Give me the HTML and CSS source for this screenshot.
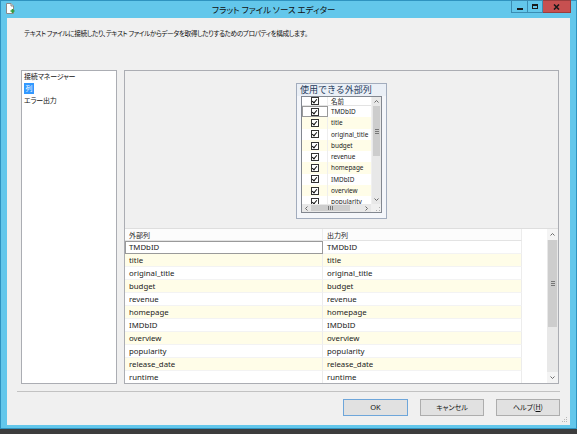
FILE: index.html
```html
<!DOCTYPE html>
<html lang="ja">
<head>
<meta charset="utf-8">
<title>フラット ファイル ソース エディター</title>
<link rel="stylesheet" href="styles.css">
</head>
<body>
<div class="window">
  <div class="titlebar">
    <svg class="app-icon" width="9" height="11" viewBox="0 0 9 11">
      <path d="M0.5 0.5H5L7.5 3V10.5H0.5Z" fill="#fff" stroke="#8a8a8a"/>
      <path d="M5 0.5V3H7.5" fill="#e0e0e0" stroke="#8a8a8a"/>
      <path d="M6.5 6V10M4.5 8H8.5" stroke="#2e9e3e" stroke-width="1.6"/>
    </svg>
    <div class="title">フラット ファイル ソース エディター</div>
    <div class="caption-buttons">
      <div class="cbtn min"><span class="glyph-min"></span></div>
      <div class="cbtn max"><span class="glyph-max"></span></div>
      <div class="cbtn close">
        <svg width="7" height="6" viewBox="0 0 7 6"><path d="M1 0.5L6 5.5M6 0.5L1 5.5" stroke="#1a1a1a" stroke-width="1.6"/></svg>
      </div>
    </div>
  </div>

  <div class="client">
    <p class="desc">テキスト ファイルに接続したり、テキスト ファイルからデータを取得したりするためのプロパティを構成します。</p>

    <div class="main">
      <ul class="nav">
        <li>接続マネージャー</li>
        <li><span class="sel">列</span></li>
        <li>エラー出力</li>
      </ul>

      <div class="panel">
        <div class="chooser-area">
          <div class="chooser">
            <div class="chooser-title">使用できる外部列</div>
            <div class="chooser-list">
              <div class="cl-body">
                <div class="cl-row cl-head">
                  <div class="cl-chk"><span class="chk"></span></div>
                  <div class="cl-name cjk">名前</div>
                </div>
                <div class="cl-row"><div class="cl-chk focus"><span class="chk"></span></div><div class="cl-name">TMDbID</div></div>
                <div class="cl-row alt"><div class="cl-chk"><span class="chk"></span></div><div class="cl-name">title</div></div>
                <div class="cl-row"><div class="cl-chk"><span class="chk"></span></div><div class="cl-name">original_title</div></div>
                <div class="cl-row alt"><div class="cl-chk"><span class="chk"></span></div><div class="cl-name">budget</div></div>
                <div class="cl-row"><div class="cl-chk"><span class="chk"></span></div><div class="cl-name">revenue</div></div>
                <div class="cl-row alt"><div class="cl-chk"><span class="chk"></span></div><div class="cl-name">homepage</div></div>
                <div class="cl-row"><div class="cl-chk"><span class="chk"></span></div><div class="cl-name">IMDbID</div></div>
                <div class="cl-row alt"><div class="cl-chk"><span class="chk"></span></div><div class="cl-name">overview</div></div>
                <div class="cl-row"><div class="cl-chk"><span class="chk"></span></div><div class="cl-name">popularity</div></div>
              </div>
              <div class="vscroll vs-small">
                <div class="arrow"><svg width="5" height="3" viewBox="0 0 5 3"><path d="M0.5 2.5L2.5 0.5L4.5 2.5" stroke="#6a6a6a" fill="none"/></svg></div>
                <div class="thumb thumb-v-small"><span class="grip-h"></span></div>
                <div class="track"></div>
                <div class="arrow"><svg width="5" height="3" viewBox="0 0 5 3"><path d="M0.5 0.5L2.5 2.5L4.5 0.5" stroke="#6a6a6a" fill="none"/></svg></div>
              </div>
              <div class="hscroll">
                <div class="arrow"><svg width="3" height="5" viewBox="0 0 3 5"><path d="M2.5 0.5L0.5 2.5L2.5 4.5" stroke="#6a6a6a" fill="none"/></svg></div>
                <div class="thumb thumb-h"><span class="grip-v"></span></div>
                <div class="track"></div>
                <div class="arrow"><svg width="3" height="5" viewBox="0 0 3 5"><path d="M0.5 0.5L2.5 2.5L0.5 4.5" stroke="#6a6a6a" fill="none"/></svg></div>
              </div>
              <div class="corner">
                <svg width="4" height="4" viewBox="0 0 4 4"><rect x="3" y="0" width="1" height="1" fill="#b0b0b0"/><rect x="3" y="3" width="1" height="1" fill="#b0b0b0"/><rect x="0" y="3" width="1" height="1" fill="#b0b0b0"/></svg>
              </div>
            </div>
          </div>
        </div>

        <div class="grid">
          <div class="grid-body">
            <div class="g-row g-head"><div class="g-cell">外部列</div><div class="g-cell c2">出力列</div></div>
            <div class="g-row"><div class="g-cell focus">TMDbID</div><div class="g-cell c2">TMDbID</div></div>
            <div class="g-row alt"><div class="g-cell">title</div><div class="g-cell c2">title</div></div>
            <div class="g-row"><div class="g-cell">original_title</div><div class="g-cell c2">original_title</div></div>
            <div class="g-row alt"><div class="g-cell">budget</div><div class="g-cell c2">budget</div></div>
            <div class="g-row"><div class="g-cell">revenue</div><div class="g-cell c2">revenue</div></div>
            <div class="g-row alt"><div class="g-cell">homepage</div><div class="g-cell c2">homepage</div></div>
            <div class="g-row"><div class="g-cell">IMDbID</div><div class="g-cell c2">IMDbID</div></div>
            <div class="g-row alt"><div class="g-cell">overview</div><div class="g-cell c2">overview</div></div>
            <div class="g-row"><div class="g-cell">popularity</div><div class="g-cell c2">popularity</div></div>
            <div class="g-row alt"><div class="g-cell">release_date</div><div class="g-cell c2">release_date</div></div>
            <div class="g-row"><div class="g-cell">runtime</div><div class="g-cell c2">runtime</div></div>
          </div>
          <div class="vscroll vs-big">
            <div class="arrow a-big"><svg width="5" height="3" viewBox="0 0 5 3"><path d="M0.5 2.5L2.5 0.5L4.5 2.5" stroke="#6a6a6a" fill="none"/></svg></div>
            <div class="thumb thumb-v-big"><span class="grip-h"></span></div>
            <div class="track"></div>
            <div class="arrow a-big"><svg width="5" height="3" viewBox="0 0 5 3"><path d="M0.5 0.5L2.5 2.5L4.5 0.5" stroke="#6a6a6a" fill="none"/></svg></div>
          </div>
        </div>
      </div>
    </div>

    <div class="sep"></div>

    <div class="buttons">
      <div class="btn btn-default">OK</div>
      <div class="btn">キャンセル</div>
      <div class="btn">ヘルプ(<u>H</u>)</div>
    </div>

    <svg class="size-grip" width="6" height="6" viewBox="0 0 6 6">
      <rect x="4" y="0" width="1" height="1" fill="#b8b8b8"/>
      <rect x="2" y="2" width="1" height="1" fill="#b8b8b8"/>
      <rect x="4" y="2" width="1" height="1" fill="#b8b8b8"/>
      <rect x="0" y="4" width="1" height="1" fill="#b8b8b8"/>
      <rect x="2" y="4" width="1" height="1" fill="#b8b8b8"/>
      <rect x="4" y="4" width="1" height="1" fill="#b8b8b8"/>
    </svg>
  </div>
</div>
</body>
</html>
```

FILE: styles.css
```css
html, body {
  margin: 0;
  padding: 0;
}

body {
  width: 577px;
  height: 434px;
  overflow: hidden;
  background: #3d3d3d;
  font-family: "Noto Sans", "Noto Sans CJK JP", sans-serif;
  color: #000;
}

.window {
  width: 577px;
  height: 429px;
  box-sizing: border-box;
  border: 1px solid #2f93c0;
  background: #63c7eb;
  display: flex;
  flex-direction: column;
}

/* ---------- title bar ---------- */
.titlebar {
  height: 17px;
  flex: none;
  display: flex;
  align-items: flex-start;
}

.app-icon {
  flex: none;
  margin: 2px 0 0 5px;
}

.title {
  flex: 1;
  text-align: left;
  padding-left: 197px;
  font-family: "Noto Sans CJK JP", sans-serif;
  font-size: 8.5px;
  line-height: 17px;
  font-feature-settings: "palt";
  color: #111;
  white-space: nowrap;
}

.caption-buttons {
  display: flex;
  margin: -1px 5px 0 0;
}

.cbtn {
  height: 13px;
  box-sizing: border-box;
  border: 1px solid #3b8db3;
  display: flex;
  align-items: center;
  justify-content: center;
}

.min { width: 17px; }
.max { width: 15px; border-left: none; }
.close {
  width: 28px;
  border-left: none;
  background: #c75050;
  border-color: #9a3d3d;
}

.glyph-min {
  width: 6px;
  height: 2px;
  background: #1a1a1a;
  margin-top: 4px;
}

.glyph-max {
  width: 6px;
  height: 5px;
  box-sizing: border-box;
  border: 1px solid #1a1a1a;
  border-top-width: 2px;
}

/* ---------- client ---------- */
.client {
  flex: 1;
  margin: 0 6px 3px 6px;
  background: #f0f0f0;
  position: relative;
  padding: 10px 10px 0 10px;
  display: flex;
  flex-direction: column;
}

.desc {
  margin: 0 0 0 7px;
  font-family: "Noto Sans CJK JP", sans-serif;
  font-size: 6.7px;
  line-height: 10px;
  font-feature-settings: "palt";
  letter-spacing: -0.42px;
  color: #111;
  white-space: nowrap;
}

.main {
  display: flex;
  gap: 7px;
  margin: 32px 1px 0 4px;
  height: 314px;
}

.nav {
  width: 96px;
  flex: none;
  box-sizing: border-box;
  border: 1px solid #abadb3;
  background: #fff;
  margin: 0;
  padding: 0 0 0 2px;
  list-style: none;
  font-family: "Noto Sans CJK JP", sans-serif;
  font-size: 7px;
  line-height: 11.8px;
  font-feature-settings: "palt";
  letter-spacing: -0.2px;
  color: #111;
}

.sel {
  display: inline-block;
  background: #3399ff;
  color: #fff;
  line-height: 11px;
  padding: 0 1.5px;
}

.panel {
  flex: 1;
  box-sizing: border-box;
  border: 1px solid #abadb3;
  display: flex;
  flex-direction: column;
}

.chooser-area {
  height: 157px;
  flex: none;
  box-sizing: border-box;
  padding-top: 12px;
  display: flex;
  justify-content: center;
  align-items: flex-start;
  background: #f0f0f0;
}

.chooser {
  width: 91px;
  height: 136px;
  box-sizing: border-box;
  border: 1px solid #a2acbd;
  background: #f4f6fa;
  display: flex;
  flex-direction: column;
}

.chooser-title {
  height: 12px;
  padding-left: 3px;
  background: #eaeff6;
  font-family: "Noto Sans CJK JP", sans-serif;
  font-size: 9px;
  line-height: 12px;
  color: #1e395b;
  white-space: nowrap;
}

.chooser-list {
  margin: 0 4px;
  height: 117px;
  box-sizing: border-box;
  border: 1px solid #828790;
  background: #fff;
  display: grid;
  grid-template-columns: 1fr 10px;
  grid-template-rows: 1fr 8px;
}

.cl-body {
  overflow: hidden;
}

.cl-row {
  display: flex;
  height: 11.3px;
  font-size: 6.4px;
  line-height: 11.3px;
  color: #222;
}

.cl-row.alt {
  background: #fffde8;
}

.cl-head {
  height: 9px;
  line-height: 9px;
  box-sizing: border-box;
  border-bottom: 1px solid #e3e3e3;
}

.cl-chk {
  width: 26px;
  flex: none;
  box-sizing: border-box;
  border-right: 1px solid #eeeeee;
  display: flex;
  align-items: center;
  justify-content: center;
}

.cl-chk.focus {
  outline: 1px solid #9a9a9a;
  outline-offset: -1px;
}

.cl-name {
  padding-left: 3px;
  white-space: nowrap;
}

.cjk {
  font-family: "Noto Sans CJK JP", sans-serif;
  font-size: 6.5px;
}

.chk {
  width: 8px;
  height: 8px;
  box-sizing: border-box;
  border: 1px solid #333;
  background: #fff;
  position: relative;
}

.chk::after {
  content: "";
  position: absolute;
  left: 1.5px;
  top: 0px;
  width: 2px;
  height: 4px;
  border-right: 1.4px solid #111;
  border-bottom: 1.4px solid #111;
  transform: rotate(40deg);
}

/* ---------- scrollbars ---------- */
.vscroll {
  display: flex;
  flex-direction: column;
  background: #e8e8e8;
}

.vs-small {
  border-left: 1px solid #f0f0f0;
}

.arrow {
  flex: none;
  height: 9px;
  display: flex;
  align-items: center;
  justify-content: center;
}

.a-big {
  height: 11px;
  background: #f4f4f4;
}

.thumb {
  flex: none;
  background: #cdcdcd;
  display: flex;
  align-items: center;
  justify-content: center;
}

.thumb-v-small {
  height: 50px;
  margin: 0 1px;
}

.thumb-v-big {
  height: 87px;
  margin: 0 1px;
}

.track {
  flex: 1;
}

.grip-h {
  width: 4px;
  height: 5px;
  background: repeating-linear-gradient(to bottom, #777 0 1px, transparent 1px 2px);
}

.hscroll {
  display: flex;
  background: #e8e8e8;
}

.hscroll .arrow {
  width: 9px;
  height: auto;
}

.thumb-h {
  width: 39px;
  margin: 1px 0;
}

.grip-v {
  width: 5px;
  height: 4px;
  background: repeating-linear-gradient(to right, #777 0 1px, transparent 1px 2px);
}

.corner {
  background: #f0f0f0;
  display: flex;
  align-items: flex-end;
  justify-content: flex-end;
  padding: 0 1px 1px 0;
}

/* ---------- main grid ---------- */
.grid {
  flex: 1;
  display: grid;
  grid-template-columns: 1fr 11px;
  border-top: 1px solid #dedede;
  background: #fff;
  overflow: hidden;
}

.grid-body {
  overflow: hidden;
}

.g-row {
  display: flex;
  height: 13px;
  font-size: 7.8px;
  line-height: 13px;
  color: #222;
}

.g-cell {
  width: 198px;
  flex: none;
  box-sizing: border-box;
  padding-left: 4px;
  border-right: 1px solid #ececec;
  border-bottom: 1px solid #f3f3f3;
  white-space: nowrap;
  overflow: hidden;
}

.g-cell.c2 {
  width: 199px;
}

.g-row.alt .g-cell {
  background: #fffde8;
}

.g-head {
  height: 12px;
  line-height: 12px;
  font-family: "Noto Sans CJK JP", sans-serif;
  font-size: 7px;
}

.g-head .g-cell {
  background: #fcfcfc;
  border-bottom: 1px solid #e3e3e3;
}

.g-cell.focus {
  outline: 1px solid #9a9a9a;
  outline-offset: -1px;
}

/* ---------- footer ---------- */
.sep {
  height: 1px;
  background: #c2c2c2;
  margin-top: 7px;
}

.buttons {
  display: flex;
  justify-content: flex-end;
  gap: 12px;
  margin-top: 7px;
}

.btn {
  width: 64px;
  height: 17px;
  box-sizing: border-box;
  border: 1px solid #adadad;
  background: #e1e1e1;
  text-align: center;
  font-family: "Noto Sans CJK JP", sans-serif;
  font-size: 7px;
  line-height: 15px;
  font-feature-settings: "palt";
  color: #111;
}

.btn-default {
  width: 65px;
  border-color: #6ea6da;
  font-family: "Noto Sans", sans-serif;
  font-size: 7.5px;
}

.size-grip {
  position: absolute;
  right: 2px;
  bottom: 2px;
}
```
